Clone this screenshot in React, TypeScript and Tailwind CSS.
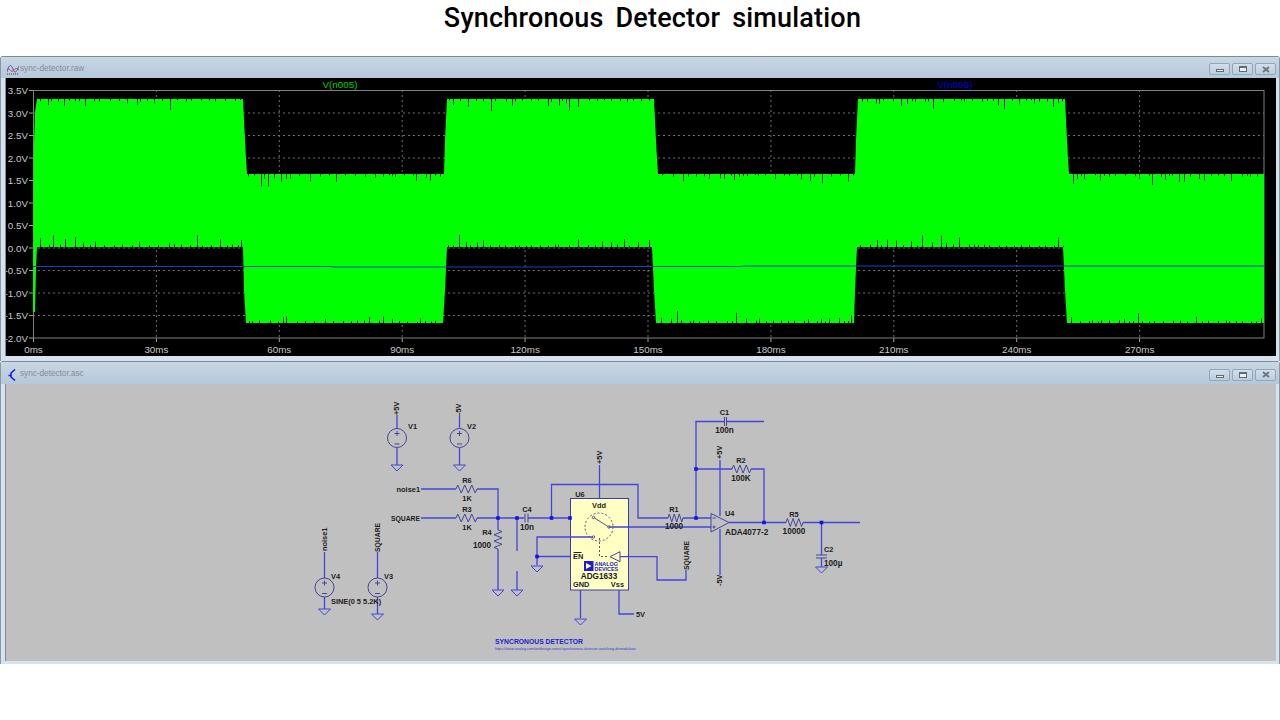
import React from "react";

function rng(seed: number) {
  let s = seed;
  return () => {
    s = (s + 0x6d2b79f5) | 0;
    let t = Math.imul(s ^ (s >>> 15), 1 | s);
    t = (t + Math.imul(t ^ (t >>> 7), 61 | t)) ^ t;
    return ((t ^ (t >>> 14)) >>> 0) / 4294967296;
  };
}

// envelope of the green trace, one entry per half period
const TOP = "33,312 33.5,160 35,112 37,99 243,99 244,120 245.5,150 247,174 444,174 445,140 447,99 654,99 655,120 656.5,150 658,174 855,174 856,140 858,99 1065,99 1066,120 1067.5,150 1069,174 1264,174";
const BOTTOM = "1264,323 1067,323 1065,290 1063,247 857,247 855,290 854,323 656,323 654,290 652,247 447,247 445,290 443,323 246,323 244,290 243,247 37,247 36,270 35,312";

const HI: [number, number][] = [[38, 242], [448, 653], [859, 1064]];
const LO: [number, number][] = [[248, 443], [659, 854], [1070, 1263]];

function spikes(seed: number, ranges: [number, number][], y: number, dir: number) {
  const r = rng(seed);
  let d = "";
  for (const [a, b] of ranges) {
    let x = a + r() * 4;
    while (x < b) {
      const v = r();
      const len = v > 0.95 ? 9 + r() * 4 : v > 0.65 ? 4 + r() * 4 : 1 + r() * 2;
      d += `M${Math.round(x) + 0.5} ${y}v${(dir * len).toFixed(1)}`;
      x += 3 + r() * 8;
    }
  }
  return d;
}

const Y_LABELS = ["3.5V", "3.0V", "2.5V", "2.0V", "1.5V", "1.0V", "0.5V", "0.0V", "-0.5V", "-1.0V", "-1.5V", "-2.0V"];
const X_LABELS = ["0ms", "30ms", "60ms", "90ms", "120ms", "150ms", "180ms", "210ms", "240ms", "270ms"];

function Plot() {
  return (
    <svg viewBox="6 78 1270 278" className="block w-[1270px] h-[278px] bg-black" style={{ fontFamily: "'Liberation Sans', sans-serif" }}>
      {Y_LABELS.map((l, i) => {
        const y = 90.5 + i * 22.5;
        return (
          <g key={l}>
            {i > 0 && i < 11 && <line x1="33" x2="1264" y1={y} y2={y} stroke="#6e6e6e" strokeDasharray="2 3" />}
            <line x1="29" x2="33" y1={y} y2={y} stroke="#a0a0a0" />
            <text x="28" y={y + 3.5} textAnchor="end" fontSize="9.8" fill="#c8c8c8">{l}</text>
          </g>
        );
      })}
      {X_LABELS.map((l, i) => {
        const x = 33.5 + i * 122.9;
        return (
          <g key={l}>
            {i > 0 && <line x1={x} x2={x} y1="90" y2="338" stroke="#6e6e6e" strokeDasharray="2 3" />}
            <line x1={x} x2={x} y1="338" y2="342" stroke="#a0a0a0" />
            <text x={x} y="352.5" textAnchor="middle" fontSize="9.8" fill="#c8c8c8">{l}</text>
          </g>
        );
      })}
      <rect x="33.5" y="90.5" width="1230.5" height="247.5" fill="none" stroke="#808080" />
      <polygon points={`${TOP} ${BOTTOM}`} fill="#00ff00" />
      <path d={spikes(11, HI, 99, 1)} stroke="#000" strokeWidth="1" opacity="0.85" />
      <path d={spikes(23, LO, 174, 1)} stroke="#000" strokeWidth="1" opacity="0.85" />
      <path d={spikes(37, HI, 247, -1)} stroke="#000" strokeWidth="1" opacity="0.85" />
      <path d={spikes(51, LO, 323, -1)} stroke="#000" strokeWidth="1" opacity="0.85" />
      <path d="M33 266.5H330L334 267H560L580 266.5H740L745 266H1264" stroke="#1a3fd0" fill="none" />
      <text x="340" y="87.5" textAnchor="middle" fontSize="9.8" fill="#00d000">V(n005)</text>
      <text x="955" y="87.5" textAnchor="middle" fontSize="9.8" fill="#0000e0">V(n006)</text>
    </svg>
  );
}

const WIRE = "#4444dc";
const PART = "#44449c";
const DIGITS = 8.2;

function zig(x: number, y: number, len: number) {
  const s = len / 6;
  return `M${x} ${y}l${s / 2} -4l${s} 8l${s} -8l${s} 8l${s} -8l${s} 8l${s / 2} -4`;
}
function zigV(x: number, y: number, len: number) {
  const s = len / 6;
  return `M${x} ${y}l4 ${s / 2}l-8 ${s}l8 ${s}l-8 ${s}l8 ${s}l-8 ${s}l4 ${s / 2}`;
}

function Ground({ x, y }: { x: number; y: number }) {
  return <polygon points={`${x - 6},${y} ${x + 6},${y} ${x},${y + 6}`} fill="none" stroke={WIRE} strokeWidth="1" />;
}
function Dot({ x, y }: { x: number; y: number }) {
  return <rect x={x - 1.8} y={y - 1.8} width="3.6" height="3.6" fill="#1414e0" />;
}
function Source({ x, y }: { x: number; y: number }) {
  return (
    <g fill="none" stroke={PART}>
      <circle cx={x} cy={y} r="9.5" />
      <path d={`M${x - 2.5} ${y - 4.5}h5M${x} ${y - 7}v5M${x - 2.5} ${y + 6}h5`} />
    </g>
  );
}
function Label({ x, y, children, anchor = "middle", size = 7.4, fill = "#1c1c1c" }: { x: number; y: number; children: React.ReactNode; anchor?: "start" | "middle" | "end"; size?: number; fill?: string }) {
  return (
    <text x={x} y={y} textAnchor={anchor} fontSize={size} fontWeight="700" fill={fill}>
      {children}
    </text>
  );
}
function VLabel({ x, y, size = 7.4, children }: { x: number; y: number; size?: number; children: React.ReactNode }) {
  return (
    <text transform={`translate(${x} ${y}) rotate(-90)`} fontSize={size} fontWeight="700" fill="#1c1c1c">
      {children}
    </text>
  );
}

function Schematic() {
  const wires = [
    "M397 415V428M397 448V465",
    "M459.5 415V428M459.5 448V465",
    "M421 489H456M477 489H498V518",
    "M421 518H456M477 518H524.5M528 518H570",
    "M498 518V530M498 549V590",
    "M517 518V551M517 571V590",
    "M324.5 552V578M324.5 597V609",
    "M377.5 552V578M377.5 597V614",
    "M551.5 518V484.5H638V518H668M683 518H711",
    "M599.5 465V498.5",
    "M609 527H711",
    "M593 537H537V565M537 556.5H570",
    "M620 556.7H657V580H686V570",
    "M580.5 590V618M619 590V614H634",
    "M696 518V421.5H724M726.5 421.5H764",
    "M696 469H732M751 469H764V522.5",
    "M720 460V516M720 529V575",
    "M729 522.5H786M803 522.5H860",
    "M821.5 522.5V555M821.5 558V567",
  ];
  return (
    <svg viewBox="6 384 1270 277" className="block w-[1270px] h-[277px] bg-[#c0c0c0]" style={{ fontFamily: "'Liberation Sans', sans-serif" }}>
      <rect x="570.5" y="498.5" width="58" height="91.5" fill="#ffffc4" stroke="#3c3ca8" />
      <path d={wires.join("")} fill="none" stroke={WIRE} strokeWidth="1.3" />

      <Source x={397} y={438} />
      <Source x={459.5} y={438} />
      <Source x={324.5} y={587.5} />
      <Source x={377.5} y={587.5} />

      {[[397, 465], [459.5, 465], [498, 590], [517, 590], [324.5, 609], [377.5, 614], [537, 566], [580.5, 619], [821.5, 567]].map(([x, y]) => (
        <Ground key={`${x}-${y}`} x={x} y={y} />
      ))}
      {[[498, 518], [517, 518], [551.5, 518], [570, 518], [537, 556.5], [696, 518], [696, 469], [764, 522.5], [821.5, 522.5]].map(([x, y]) => (
        <Dot key={`${x}-${y}`} x={x} y={y} />
      ))}

      <g fill="none" stroke={PART}>
        <path d={zig(456, 489, 21)} />
        <path d={zig(456, 518, 21)} />
        <path d={zig(668, 518, 15)} />
        <path d={zig(732, 469, 19)} />
        <path d={zig(786, 522.5, 17)} />
        <path d={zigV(498, 530, 19)} />
        <path d="M525 513.5V522.5M528 513.5V522.5" />
        <path d="M724.5 417V426M726.5 417V426" />
        <path d="M816 555H827M816 558H827" />
        <polygon points="711,513.5 711,532 729,522.5" />
        <path d="M712.5 518h3M712.5 527h3M714 525.5v3" />
      </g>

      <g fill="none" stroke="#55557a">
        <circle cx="599" cy="527" r="14" strokeDasharray="2 2" />
        <circle cx="593.5" cy="517.5" r="1.2" />
        <circle cx="609" cy="527" r="1.2" />
        <circle cx="593.5" cy="537" r="1.2" />
        <path d="M594.5 518L608 526.5" />
        <path d="M599.5 538V556.5H608.5" strokeDasharray="2 2" />
      </g>
      <polygon points="620,551.7 620,561.7 610,556.7" fill="none" stroke={PART} />

      <rect x="584" y="561" width="9.5" height="10" fill="#1c1cd0" />
      <polygon points="586,563 586,569 591.5,566" fill="#ffffc4" />
      <Label x={594.5} y={565.5} anchor="start" size={5.4} fill="#2020d0">ANALOG</Label>
      <Label x={594.5} y={570.5} anchor="start" size={5.4} fill="#2020d0">DEVICES</Label>

      <Label x={599} y={508}>Vdd</Label>
      <Label x={580} y={497}>U6</Label>
      <Label x={599} y={579} size={DIGITS}>ADG1633</Label>
      <Label x={573} y={587} anchor="start">GND</Label>
      <Label x={624} y={587} anchor="end">Vss</Label>
      <Label x={573} y={559} anchor="start">EN</Label>
      <path d="M573.5 552.5H581.5" stroke="#222" />

      <VLabel x={399} y={415}>+5V</VLabel>
      <VLabel x={461} y={415}>-5V</VLabel>
      <VLabel x={601.5} y={464}>+5V</VLabel>
      <VLabel x={722} y={459}>+5V</VLabel>
      <VLabel x={722} y={586}>-5V</VLabel>
      <VLabel x={688.5} y={570} size={6.8}>SQUARE</VLabel>
      <VLabel x={326.5} y={551}>noise1</VLabel>
      <VLabel x={380} y={552} size={6.8}>SQUARE</VLabel>

      <Label x={408} y={429} anchor="start">V1</Label>
      <Label x={467} y={429} anchor="start">V2</Label>
      <Label x={331} y={579} anchor="start">V4</Label>
      <Label x={384} y={579} anchor="start">V3</Label>
      <Label x={331} y={604} anchor="start">SINE(0 5 5.2K)</Label>

      <Label x={420} y={492} anchor="end">noise1</Label>
      <Label x={420} y={521} anchor="end" size={6.8}>SQUARE</Label>
      <Label x={467} y={483}>R6</Label>
      <Label x={467} y={501}>1K</Label>
      <Label x={467} y={512}>R3</Label>
      <Label x={467} y={530}>1K</Label>
      <Label x={487} y={535}>R4</Label>
      <Label x={482} y={548} size={DIGITS}>1000</Label>
      <Label x={527} y={512}>C4</Label>
      <Label x={527} y={530} size={DIGITS}>10n</Label>
      <Label x={674} y={512}>R1</Label>
      <Label x={674} y={529} size={DIGITS}>1000</Label>
      <Label x={724.5} y={415}>C1</Label>
      <Label x={724.5} y={433} size={DIGITS}>100n</Label>
      <Label x={741} y={463}>R2</Label>
      <Label x={741} y={481} size={DIGITS}>100K</Label>
      <Label x={725} y={516} anchor="start">U4</Label>
      <Label x={725} y={535} anchor="start" size={DIGITS}>ADA4077-2</Label>
      <Label x={794} y={517}>R5</Label>
      <Label x={794} y={534} size={DIGITS}>10000</Label>
      <Label x={824} y={552} anchor="start">C2</Label>
      <Label x={824} y={566} anchor="start" size={DIGITS}>100µ</Label>
      <Label x={636} y={616.5} anchor="start">5V</Label>

      <Label x={495} y={644} anchor="start" size={6.8} fill="#2020d0">SYNCRONOUS DETECTOR</Label>
      <text x="495" y="650" fontSize="3.7" fill="#3a3ad8">https://www.analog.com/en/design-notes/synchronous-detector-switching-demodulator</text>
    </svg>
  );
}

function WaveIcon() {
  return (
    <svg viewBox="0 0 12 12" className="w-[12px] h-[12px]">
      <path d="M0 9C2 1 4 1 6 6S9 10 12 3" fill="none" stroke="#3b5bc8" />
      <path d="M0 7C3 4 4 10 6 8S9 4 12 7" fill="none" stroke="#d04040" />
      <path d="M0 11H12" stroke="#333" strokeDasharray="1 1" />
    </svg>
  );
}

function TransistorIcon() {
  return (
    <svg viewBox="0 0 12 12" className="w-[12px] h-[12px]">
      <path d="M8 0.5L4 4V8L8 11.5M1.5 6.5H4" fill="none" stroke="#1a1ae8" strokeWidth="1.6" />
    </svg>
  );
}

function WinButton({ kind }: { kind: "min" | "max" | "close" }) {
  return (
    <div className="flex items-center justify-center w-[21px] h-[12px] rounded-[2px] border border-[#8fa6bb] bg-gradient-to-b from-[#d3dfea] to-[#bccddd]">
      {kind === "min" && <div className="mt-[3px] w-[8px] h-[3px] border border-[#5e6a75] bg-[#e8eef4]" />}
      {kind === "max" && <div className="w-[8px] h-[6px] border border-[#5e6a75] border-t-2 bg-[#e8eef4]" />}
      {kind === "close" && (
        <svg viewBox="0 0 8 7" className="w-[8px] h-[7px]">
          <path d="M1 1L7 6M7 1L1 6" stroke="#6a7580" strokeWidth="1.8" />
        </svg>
      )}
    </div>
  );
}

function Window({ title, icon, height, bar, children }: { title: string; icon: React.ReactNode; height: string; bar: string; children: React.ReactNode }) {
  return (
    <div className={`flex flex-col ${height} border-t border-x border-t-[#7f8a94] border-x-[#8a96a2] rounded-t-[3px] bg-[#d6e3ee]`}>
      <div className={`flex items-center ${bar} pl-[6px] pr-[3px] pt-[3px] bg-gradient-to-b from-[#c9d7e4] to-[#b5c8da] shrink-0`}>
        {icon}
        <span className="ml-[1px] text-[8.2px] text-[#868c94]" style={{ fontFamily: "'Liberation Sans', sans-serif" }}>
          {title}
        </span>
        <div className="ml-auto flex gap-[2px]">
          <WinButton kind="min" />
          <WinButton kind="max" />
          <WinButton kind="close" />
        </div>
      </div>
      <div className="flex-1 min-h-0 overflow-hidden pl-[4px] pr-[3px]">
        <div className="border-l border-[#7f8a94]">{children}</div>
      </div>
    </div>
  );
}

export default function App() {
  return (
    <div className="flex flex-col w-[1280px] h-[720px] bg-white overflow-hidden">
      <div className="flex items-center justify-center h-[56px] pb-[22px] pt-[2px] pl-[25px] shrink-0">
        <h1 className="text-[27px] font-medium text-black tracking-[0.2px]" style={{ fontFamily: "Roboto, sans-serif", wordSpacing: "5px" }}>
          Synchronous Detector simulation
        </h1>
      </div>
      <Window title="sync-detector.raw" icon={<WaveIcon />} height="h-[305px]" bar="h-[21px]">
        <Plot />
      </Window>
      <Window title="sync-detector.asc" icon={<TransistorIcon />} height="h-[303px]" bar="h-[22px]">
        <Schematic />
      </Window>
    </div>
  );
}
